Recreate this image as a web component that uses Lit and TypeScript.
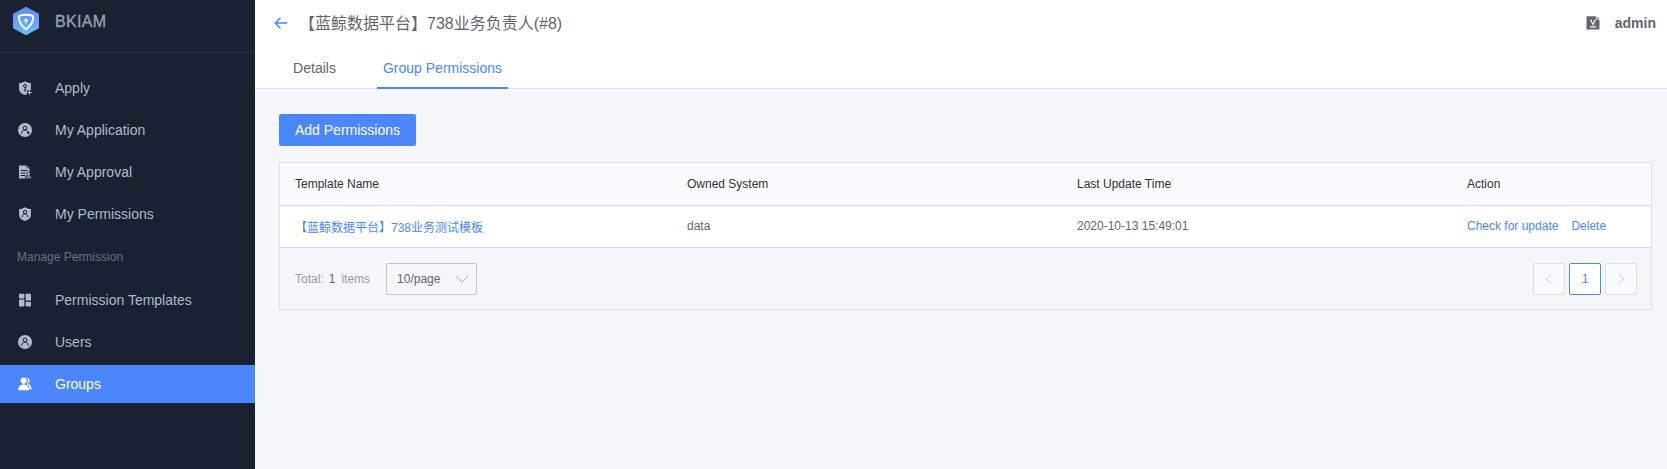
import { LitElement, html, svg, css, type SVGTemplateResult } from 'lit';
import { customElement, property } from 'lit/decorators.js';

const shield = 'M7 .2c1.700 1.200 3.600 1.800 5.900 1.900v5.800c0 3-2.500 4.900-5.900 6-3.400-1.100-5.900-3-5.900-6V2.100C3.400 2 5.300 1.400 7 .2z';

const icons: Record<string, SVGTemplateResult> = {
  apply: svg`
    <path fill="currentColor" d=${shield} />
    <circle class="cut" cx="7" cy="4.900" r="1.500" />
    <path class="cut" d="M7 6.400v4.400M7 8.900h1.600" />
    <path class="gap" d="M8.900 11.500h5.300M11.500 8.900v5.300" />
    <path class="mark" d="M9.300 11.500h4.500M11.500 9.300v4.400" />`,
  application: svg`
    <circle fill="currentColor" cx="7" cy="7" r="7" />
    <circle class="cut" cx="7" cy="5" r="2" />
    <path class="cut" d="M3.500 10.700c.3-2.400 1.400-3.700 3.500-3.700 1.300 0 2.200.6 2.800 1.600M10.300 8.300v3M8.800 9.800h3" />`,
  approval: svg`
    <path fill="currentColor" d="M1 .6h7.800v2.700h2.700V7.500L9 8v5.500H1z" />
    <path fill="currentColor" d="M9.700.9l1.800 1.800H9.700z" />
    <path class="cut" d="M2.700 5.500h6.600M2.700 8h5M2.700 10.500h4.500" />
    <path class="halo" d="M10.600 6.900a1.700 1.700 0 0 1 1 3.100l.2 1h1.700v2.700H7.600V11h1.700l.3-1a1.700 1.700 0 0 1 1-3.100z" />
    <path class="cut thin" d="M8 12.100h5" />`,
  permissions: svg`
    <path fill="currentColor" d=${shield} />
    <circle class="cut" cx="7" cy="5.100" r="1.700" />
    <path class="cut" d="M4.200 10.200c.1-2.200 1.100-3.400 2.800-3.400s2.700 1.200 2.800 3.400" />`,
  templates: svg`
    <rect fill="currentColor" x="1" y=".8" width="5.400" height="4.600" rx=".8" />
    <rect fill="currentColor" x="1" y="6.500" width="5.400" height="6.900" rx=".8" />
    <rect fill="currentColor" x="7.600" y=".8" width="5.400" height="6.800" rx=".8" />
    <rect fill="currentColor" x="7.600" y="8.700" width="5.400" height="4.700" rx=".8" />`,
  users: svg`
    <circle fill="currentColor" cx="7" cy="7" r="7" />
    <circle class="cut" cx="7" cy="5" r="2" />
    <path class="cut" d="M3.600 10.900C3.900 8.300 5 7 7 7s3.100 1.300 3.400 3.900" />`,
  groups: svg`
    <circle fill="currentColor" cx="5.700" cy="3.600" r="3.100" />
    <path fill="currentColor" d="M.2 13.300c0-3.800 2-5.700 5.500-5.700s5.300 1.900 5.300 5.700z" />
    <path fill="currentColor" d="M8.800.7c1.700.2 2.700 1.400 2.700 3 0 1.200-.5 2.100-1.500 2.700 2.300.9 3.500 2.900 3.500 6h-1.700c-.2-2.600-1.100-4.400-2.900-5.500.8-.9 1.200-2 1.200-3.300 0-1.200-.5-2.100-1.300-2.900z" />`,
};

@customElement('nav-item')
class NavItem extends LitElement {
  @property() icon = '';
  @property() label = '';
  @property({ type: Boolean, reflect: true }) active = false;

  static styles = css`
    :host {
      --bg: #1a2130;
      display: flex;
      align-items: center;
      box-sizing: border-box;
      height: 38px;
      padding-left: 18px;
      gap: 23px;
      font-size: 14px;
      color: #b0bad2;
    }
    :host([active]) {
      --bg: #4b86fb;
      background: #4b86fb;
      color: #fff;
    }
    svg { width: 14px; height: 14px; flex: none; overflow: visible; }
    .cut { fill: none; stroke: var(--bg); stroke-width: 1; }
    .thin { stroke-width: 0.7; }
    .gap { stroke: var(--bg); stroke-width: 2.8; }
    .mark { stroke: currentColor; stroke-width: 1.1; }
    .halo { fill: currentColor; stroke: var(--bg); stroke-width: 0.8; }
  `;

  render() {
    return html`<svg viewBox="0 0 14 14">${icons[this.icon]}</svg><span>${this.label}</span>`;
  }
}

@customElement('app-root')
class AppRoot extends LitElement {
  static styles = css`
    :host {
      display: grid;
      grid-template-columns: 255px 1fr;
      height: 100vh;
      overflow: hidden;
      background: #f5f6fa;
      color: #63656e;
      font-family: 'Liberation Sans', Arial, 'Noto Sans CJK SC', sans-serif;
      font-size: 12px;
    }
    * { box-sizing: border-box; }
    svg { display: block; flex: none; }
    .sidebar { background: #1a2130; }
    .brand {
      display: flex;
      align-items: center;
      height: 53px;
      padding: 0 0 11px 13px;
      gap: 16px;
      border-bottom: 1px solid #2b3243;
      font-size: 16px;
      color: #96a2b9;
      -webkit-text-stroke: 0.3px;
      letter-spacing: 0.3px;
    }
    .brand span { padding-top: 2px; }
    .menu { display: flex; flex-direction: column; gap: 4px; padding-top: 16px; }
    .group-title {
      display: flex;
      align-items: center;
      height: 40px;
      padding: 0 0 0 17px;
      color: #66718c;
    }
    .main { min-width: 0; }
    .header { height: 89px; background: #fff; border-bottom: 1px solid #dcdee5; }
    .title-row {
      display: flex;
      align-items: center;
      height: 46px;
      padding: 0 11px 0 19px;
    }
    .title { margin: 0 auto 0 11px; padding-bottom: 3px; font-size: 16px; font-weight: 400; white-space: nowrap; }
    .user { margin-left: 15px; font-size: 14px; font-weight: 700; }
    .tabs { display: flex; height: 43px; padding-left: 19px; font-size: 14px; }
    .tab {
      display: flex;
      align-items: center;
      justify-content: center;
      height: 43px;
      width: 81px;
      padding-top: 2px;
      border-bottom: 2px solid transparent;
    }
    .tab.on { margin-left: 22px; width: 131px; color: #4b86fb; border-color: #4b86fb; }
    .content { padding: 25px 15px 0 24px; }
    .primary {
      display: block;
      width: 137px;
      height: 32px;
      padding: 0;
      border: 0;
      border-radius: 2px;
      background: #4b86fb;
      color: #fff;
      font: 14px 'Liberation Sans', Arial, sans-serif;
    }
    .table { margin-top: 16px; border: 1px solid #dfe0e5; border-radius: 2px; }
    .row {
      display: grid;
      grid-template-columns: 392px 390px 390px 1fr;
      align-items: center;
      height: 42px;
      padding-bottom: 1px;
      background: #fff;
      border-bottom: 1px solid #dcdee5;
    }
    .row.head { height: 43px; padding-bottom: 0; background: #fafbfd; color: #313238; }
    .cell { padding-left: 15px; white-space: nowrap; }
    .actions { display: flex; gap: 13px; }
    .link { color: #4b86fb; }
    .footer { display: flex; align-items: center; height: 61px; padding: 0 14px 0 15px; }
    .muted { color: #979ba5; }
    .count { margin: 0 6px 0 5px; }
    .select {
      display: flex;
      align-items: center;
      justify-content: space-between;
      width: 91px;
      height: 32px;
      margin: 0 auto 0 16px;
      padding: 0 7px 0 10px;
      border: 1px solid #c4c6cc;
      border-radius: 2px;
    }
    .pager { display: flex; gap: 4px; }
    .page {
      display: flex;
      align-items: center;
      justify-content: center;
      width: 32px;
      height: 32px;
      border: 1px solid #dcdee5;
      border-radius: 2px;
      background: #fafbfd;
    }
    .page.on { background: #fff; border-color: #4b86fb; color: #4b86fb; }
  `;

  render() {
    return html`
      <aside class="sidebar">
        <div class="brand">
          <svg width="26" height="28" viewBox="0 0 26 28">
            <defs>
              <linearGradient id="logo" x1="0" y1="0" x2="0" y2="1">
                <stop offset="0" stop-color="#5b8df0" />
                <stop offset="1" stop-color="#72b8f7" />
              </linearGradient>
            </defs>
            <path fill="url(#logo)" stroke="url(#logo)" stroke-width="2" stroke-linejoin="round" d="M13 1l12 6.400v13.200L13 27 1 20.600V7.400z" />
            <path fill="none" stroke="#fff" stroke-width="1.900" stroke-linejoin="round" d="M13 7.800c2.600 0 5 .4 7.300 1.300 0 5.600-2.400 9.800-7.300 13.200-4.900-3.400-7.300-7.600-7.300-13.200C8 8.200 10.400 7.800 13 7.800z" />
            <circle cx="13" cy="13.200" r="1.600" fill="#fff" />
            <path stroke="#fff" stroke-width="1.200" d="M13 13v3.500" />
          </svg>
          <span>BKIAM</span>
        </div>
        <nav class="menu">
          <nav-item icon="apply" label="Apply"></nav-item>
          <nav-item icon="application" label="My Application"></nav-item>
          <nav-item icon="approval" label="My Approval"></nav-item>
          <nav-item icon="permissions" label="My Permissions"></nav-item>
          <div class="group-title">Manage Permission</div>
          <nav-item icon="templates" label="Permission Templates"></nav-item>
          <nav-item icon="users" label="Users"></nav-item>
          <nav-item icon="groups" label="Groups" active></nav-item>
        </nav>
      </aside>
      <main class="main">
        <header class="header">
          <div class="title-row">
            <svg width="14" height="12" viewBox="0 0 14 12" fill="none" stroke="#4b86fb" stroke-width="1.500">
              <path d="M13.300 6H1.500M6.500 .8L1.300 6l5.200 5.200" />
            </svg>
            <h1 class="title">【蓝鲸数据平台】738业务负责人(#8)</h1>
            <svg width="14" height="14" viewBox="0 0 14 14">
              <path fill="#63656e" d="M.5.300h9.300v3.200h3.700v10H.500z" />
              <path fill="#63656e" d="M10.700.6L13.100 2.700h-2.400z" />
              <path fill="none" stroke="#fff" stroke-width="1.100" d="M4.200 4.200h1.700M8 4.200h1.700M5 4.500l2 4 2-4M4 10.900h6" />
            </svg>
            <span class="user">admin</span>
          </div>
          <div class="tabs">
            <div class="tab">Details</div>
            <div class="tab on">Group Permissions</div>
          </div>
        </header>
        <section class="content">
          <button class="primary">Add Permissions</button>
          <div class="table">
            <div class="row head">
              <div class="cell">Template Name</div>
              <div class="cell">Owned System</div>
              <div class="cell">Last Update Time</div>
              <div class="cell">Action</div>
            </div>
            <div class="row">
              <div class="cell link">【蓝鲸数据平台】738业务测试模板</div>
              <div class="cell">data</div>
              <div class="cell">2020-10-13 15:49:01</div>
              <div class="cell link actions"><span>Check for update</span><span>Delete</span></div>
            </div>
            <div class="footer">
              <span class="muted">Total:</span><span class="count">1</span><span class="muted">items</span>
              <div class="select">
                <span>10/page</span>
                <svg width="14" height="8" viewBox="0 0 14 8" fill="none" stroke="#aeb1ba"><path d="M1 1l6 6 6-6" /></svg>
              </div>
              <div class="pager">
                <div class="page"><svg width="8" height="12" viewBox="0 0 8 12" fill="none" stroke="#c4c6cc"><path d="M6.500 .8L1.300 6l5.200 5.200" /></svg></div>
                <div class="page on">1</div>
                <div class="page"><svg width="8" height="12" viewBox="0 0 8 12" fill="none" stroke="#c4c6cc"><path d="M1.500 .8L6.700 6l-5.200 5.200" /></svg></div>
              </div>
            </div>
          </div>
        </section>
      </main>
    `;
  }
}
